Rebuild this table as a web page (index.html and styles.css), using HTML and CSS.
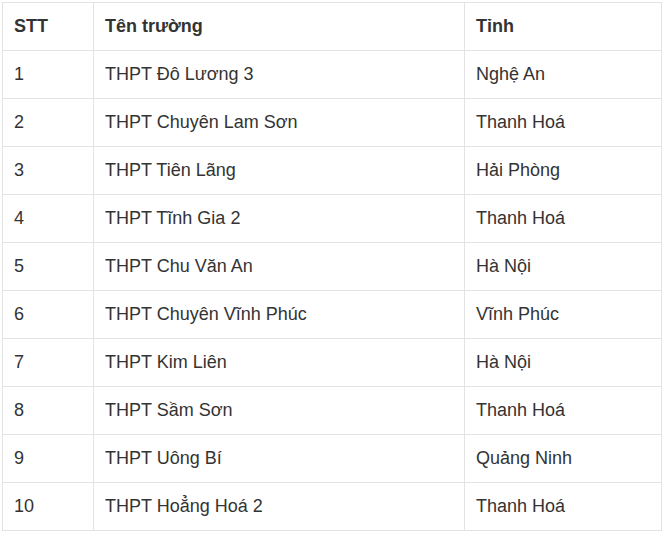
FILE: index.html
```html
<!DOCTYPE html>
<html lang="vi">
<head>
<meta charset="utf-8">
<link rel="stylesheet" href="styles.css">
</head>
<body>
<table class="schools">
  <colgroup>
    <col class="c-stt">
    <col class="c-name">
    <col class="c-prov">
  </colgroup>
  <thead>
    <tr><th>STT</th><th>Tên trường</th><th>Tỉnh</th></tr>
  </thead>
  <tbody>
    <tr><td>1</td><td>THPT Đô Lương 3</td><td>Nghệ An</td></tr>
    <tr><td>2</td><td>THPT Chuyên Lam Sơn</td><td>Thanh Hoá</td></tr>
    <tr><td>3</td><td>THPT Tiên Lãng</td><td>Hải Phòng</td></tr>
    <tr><td>4</td><td>THPT Tĩnh Gia 2</td><td>Thanh Hoá</td></tr>
    <tr><td>5</td><td>THPT Chu Văn An</td><td>Hà Nội</td></tr>
    <tr><td>6</td><td>THPT Chuyên Vĩnh Phúc</td><td>Vĩnh Phúc</td></tr>
    <tr><td>7</td><td>THPT Kim Liên</td><td>Hà Nội</td></tr>
    <tr><td>8</td><td>THPT Sầm Sơn</td><td>Thanh Hoá</td></tr>
    <tr><td>9</td><td>THPT Uông Bí</td><td>Quảng Ninh</td></tr>
    <tr><td>10</td><td>THPT Hoẳng Hoá 2</td><td>Thanh Hoá</td></tr>
  </tbody>
</table>
</body>
</html>
```
FILE: styles.css
```css
html, body {
  margin: 0;
  padding: 0;
  background: #fff;
}
body {
  padding: 2px 0 0 2px;
  font-family: "Liberation Sans", Arial, sans-serif;
  font-size: 18px;
  color: #333;
}
.schools {
  border-collapse: collapse;
  table-layout: fixed;
  width: 659px;
}
.c-stt { width: 91px; }
.c-name { width: 371px; }
.c-prov { width: 197px; }
.schools th,
.schools td {
  border: 1px solid #e3e3e3;
  height: 48px;
  padding: 0 0 0 11px;
  text-align: left;
  vertical-align: middle;
  box-sizing: border-box;
}
.schools th {
  font-weight: bold;
  color: #333;
}
```
